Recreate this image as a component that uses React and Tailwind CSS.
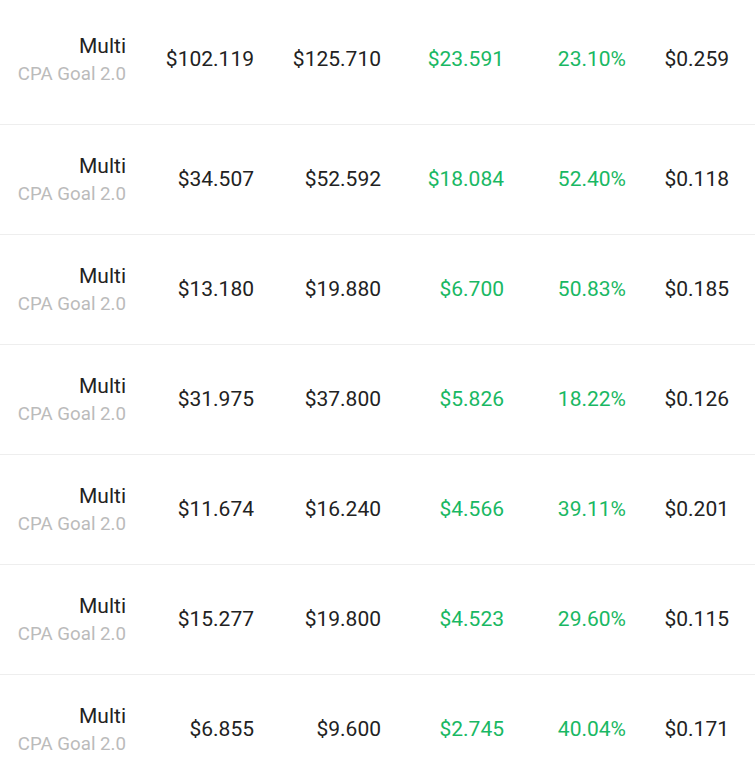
// App.jsx — campaign stats table

const ROWS = [
  { cost: '$102.119', revenue: '$125.710', profit: '$23.591', roi: '23.10%', epc: '$0.259' },
  { cost: '$34.507', revenue: '$52.592', profit: '$18.084', roi: '52.40%', epc: '$0.118' },
  { cost: '$13.180', revenue: '$19.880', profit: '$6.700', roi: '50.83%', epc: '$0.185' },
  { cost: '$31.975', revenue: '$37.800', profit: '$5.826', roi: '18.22%', epc: '$0.126' },
  { cost: '$11.674', revenue: '$16.240', profit: '$4.566', roi: '39.11%', epc: '$0.201' },
  { cost: '$15.277', revenue: '$19.800', profit: '$4.523', roi: '29.60%', epc: '$0.115' },
  { cost: '$6.855', revenue: '$9.600', profit: '$2.745', roi: '40.04%', epc: '$0.171' },
];

const Row = ({ row, first }) => (
  <div
    className={`grid grid-cols-[126px_128px_127px_123px_122px_103px] items-center pr-[26px] border-b border-[#eeeeee] text-right text-[21px] text-[#222222] ${
      first ? 'h-[125px] pb-[4px]' : 'h-[110px] pt-[1px]'
    }`}
  >
    {/* Source / strategy */}
    <div className="flex flex-col items-end">
      <span className="leading-[28px]">Multi</span>
      <span className="text-[18.7px] leading-[28px] text-[#bbbbbb]">CPA Goal 2.0</span>
    </div>
    <div>{row.cost}</div>
    <div>{row.revenue}</div>
    <div className="text-[#19b863]">{row.profit}</div>
    <div className="text-[#19b863]">{row.roi}</div>
    <div>{row.epc}</div>
  </div>
);

const App = () => (
  <div className="w-[755px] h-[770px] overflow-hidden bg-white font-['Roboto',sans-serif]">
    {ROWS.map((row, i) => (
      <Row key={i} row={row} first={i === 0} />
    ))}
  </div>
);

export default App;
